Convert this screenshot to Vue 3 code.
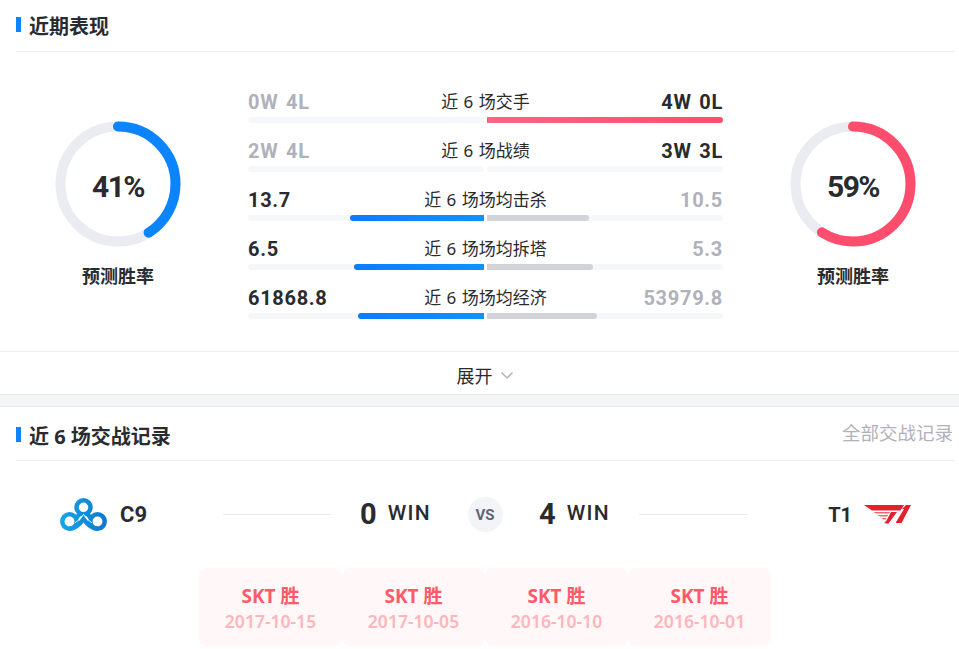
<template>
  <div class="page">
    <section class="panel">
      <div class="head">
        <h2 class="title">近期表现</h2>
      </div>
      <div class="stats">
        <div class="ring-box">
          <div class="ring">
            <svg width="126" height="126" viewBox="0 0 126 126">
              <circle cx="63" cy="63" r="57.5" class="ring-bg" />
              <circle
                cx="63" cy="63" r="57.5" class="ring-bar" stroke="#0a84ff"
                :stroke-dasharray="dash(41)" transform="rotate(-90 63 63)"
              />
            </svg>
            <span class="ring-num">41%</span>
          </div>
          <p class="ring-label">预测胜率</p>
        </div>

        <div class="rows">
          <div class="row" v-for="r in rows" :key="r.label">
            <div class="row-text">
              <span class="num" :class="{ dim: r.win !== 'l' }">{{ r.left }}</span>
              <span class="label">{{ r.label }}</span>
              <span class="num" :class="{ dim: r.win !== 'r' }">{{ r.right }}</span>
            </div>
            <div class="bars">
              <div class="track left">
                <div class="fill blue" :style="{ width: r.lw + 'px' }"></div>
              </div>
              <div class="track">
                <div class="fill" :class="r.win === 'r' ? 'red' : 'gray'" :style="{ width: r.rw + 'px' }"></div>
              </div>
            </div>
          </div>
        </div>

        <div class="ring-box">
          <div class="ring">
            <svg width="126" height="126" viewBox="0 0 126 126">
              <circle cx="63" cy="63" r="57.5" class="ring-bg" />
              <circle
                cx="63" cy="63" r="57.5" class="ring-bar" stroke="#ff4d6d"
                :stroke-dasharray="dash(59)" transform="rotate(-90 63 63)"
              />
            </svg>
            <span class="ring-num">59%</span>
          </div>
          <p class="ring-label">预测胜率</p>
        </div>
      </div>
      <div class="more">
        <span>展开</span>
        <svg width="14" height="14" viewBox="0 0 14 14" class="chev">
          <path d="M1.500 4.500 7 10l5.500-5.500" fill="none" stroke="#b0b1bb" stroke-width="1.500" />
        </svg>
      </div>
    </section>

    <section class="panel second">
      <div class="head">
        <h2 class="title">近 6 场交战记录</h2>
        <a class="all">全部交战记录</a>
      </div>
      <div class="versus">
        <div class="team">
          <svg class="c9" width="47" height="34" viewBox="0 0 47 34">
            <defs>
              <linearGradient id="c9g" gradientUnits="userSpaceOnUse" x1="0" y1="0" x2="47" y2="0">
                <stop offset="0" stop-color="#17a6e8" />
                <stop offset="1" stop-color="#0a78cf" />
              </linearGradient>
            </defs>
            <g fill="none" stroke="url(#c9g)" stroke-width="4.500">
              <circle cx="23.500" cy="9.300" r="7" />
              <circle cx="9.500" cy="23.500" r="7.200" />
              <circle cx="37.500" cy="23.500" r="7.200" />
              <path d="M9.500 30.700C15.500 30.700 20 26 23.500 21 27 26 31.500 30.700 37.500 30.700" />
              <path d="M19.500 15.500C18.500 18 17 19.500 15 20" />
              <path d="M27.500 15.500C28.500 18 30 19.500 32 20" />
            </g>
            <g fill="none" stroke="#fff" stroke-width="1" stroke-linecap="round">
              <path d="M23.500 16.500C21.500 19 19 22 15.500 24.500" />
              <path d="M23.500 16.500C25.500 19 28 22 31.500 24.500" />
            </g>
          </svg>
          <span class="team-name c9-name">C9</span>
        </div>
        <div class="line"></div>
        <div class="score">
          <div class="score-side"><b>0</b><span>WIN</span></div>
          <div class="vs">VS</div>
          <div class="score-side"><b>4</b><span>WIN</span></div>
        </div>
        <div class="line"></div>
        <div class="team right">
          <span class="team-name t1-name">T1</span>
          <svg width="47" height="19" viewBox="0 0 47 19">
            <path d="M0 0H40L36.500 5.500H8Z" fill="#e4202f" />
            <path d="M9.500 7H26L25 8.500H12Z" fill="#f0666f" />
            <path d="M13.500 10H24.200L23.200 11.500H16Z" fill="#f0666f" />
            <path d="M17.500 13H22.500L21.500 14.500H19.500Z" fill="#f0666f" />
            <path d="M27 7H33L24.500 18.500H21.500L20.500 16.500H22Z" fill="#e4202f" />
            <path d="M42 0H47L37.500 18H31.500L40 4H38Z" fill="#e4202f" />
          </svg>
        </div>
      </div>
      <div class="matches">
        <div class="match" v-for="d in dates" :key="d">
          <div class="match-res">SKT 胜</div>
          <div class="match-date">{{ d }}</div>
        </div>
      </div>
    </section>
  </div>
</template>

<script setup>
const rows = [
  { left: '0W 4L', right: '4W 0L', label: '近 6 场交手', lw: 0, rw: 236, win: 'r' },
  { left: '2W 4L', right: '3W 3L', label: '近 6 场战绩', lw: 0, rw: 0, win: 'r' },
  { left: '13.7', right: '10.5', label: '近 6 场场均击杀', lw: 134, rw: 102, win: 'l' },
  { left: '6.5', right: '5.3', label: '近 6 场场均拆塔', lw: 130, rw: 106, win: 'l' },
  { left: '61868.8', right: '53979.8', label: '近 6 场场均经济', lw: 126, rw: 110, win: 'l' },
]

const dates = ['2017-10-15', '2017-10-05', '2016-10-10', '2016-10-01']

const dash = (pct) => {
  const len = 2 * Math.PI * 57.5
  return `${(len * pct) / 100} ${len}`
}
</script>

<style>
html, body {
  background: #f4f5f7;
  overflow: hidden;
}
</style>

<style scoped>
.page {
  width: 959px;
  height: 649px;
  font-family: "Noto Sans", "Noto Sans CJK SC", sans-serif;
  color: #2a2b2f;
  overflow: hidden;
}
.panel {
  background: #fff;
  padding: 0 4px 0 16px;
  height: 394px;
  border-bottom: 1px solid #e9eaee;
}
.second {
  margin-top: 11px;
  height: 243px;
  border-top: 1px solid #e9eaee;
  border-bottom: none;
}
.head {
  height: 51px;
  display: flex;
  align-items: center;
  justify-content: space-between;
  border-bottom: 1px solid #eeeff2;
}
.second .head {
  height: 53px;
}
.title {
  margin: 0;
  font-size: 20px;
  font-weight: 700;
  line-height: 24px;
  padding-left: 13px;
  position: relative;
  top: 1px;
}
.second .title {
  top: 3px;
}
.title::before {
  content: "";
  position: absolute;
  left: 0;
  top: 2.500px;
  width: 5px;
  height: 15px;
  background: #0a84ff;
}
.all {
  font-size: 18.500px;
  color: #b0b1bb;
  padding-right: 2px;
  position: relative;
  top: -2px;
}
.stats {
  display: flex;
  height: 299px;
  padding-top: 38px;
  box-sizing: border-box;
}
.ring-box {
  width: 204px;
  flex: none;
  display: flex;
  flex-direction: column;
  align-items: center;
  padding-top: 31px;
}
.ring {
  width: 126px;
  height: 126px;
  position: relative;
}
.ring svg {
  display: block;
}
.ring-bg {
  fill: none;
  stroke: #ebecf2;
  stroke-width: 10;
}
.ring-bar {
  fill: none;
  stroke-width: 10;
  stroke-linecap: round;
}
.ring-num {
  position: absolute;
  inset: 4px 0 0;
  display: flex;
  align-items: center;
  justify-content: center;
  font-family: Roboto, sans-serif;
  font-weight: 700;
  font-size: 30px;
  letter-spacing: -1.500px;
}
.ring-label {
  margin: 17px 0 0;
  font-size: 18px;
  font-weight: 700;
  line-height: 24px;
}
.rows {
  width: 475px;
  margin: 0 28px;
  flex: none;
  display: flex;
  flex-direction: column;
  gap: 16px;
}
.row-text {
  height: 24px;
  display: flex;
  justify-content: space-between;
  align-items: center;
  position: relative;
}
.num {
  font-family: Roboto, sans-serif;
  font-weight: 700;
  font-size: 20px;
  letter-spacing: 0.7px;
  word-spacing: 2px;
  line-height: 24px;
}
.dim {
  color: #b0b1bb;
}
.label {
  position: absolute;
  left: 0;
  right: 0;
  top: 0;
  text-align: center;
  font-size: 17px;
  line-height: 24px;
  word-spacing: 1px;
}
.bars {
  margin-top: 3px;
  display: flex;
  gap: 3px;
}
.track {
  flex: 1;
  height: 6px;
  background: #f6f7f9;
  border-radius: 3px;
  display: flex;
}
.track.left {
  justify-content: flex-end;
}
.fill {
  height: 6px;
}
.blue {
  background: linear-gradient(90deg, #0a7dff, #0f92ff);
  border-radius: 3px 0 0 3px;
}
.gray {
  background: #d2d3d9;
  border-radius: 0 3px 3px 0;
}
.red {
  background: linear-gradient(90deg, #ff6482, #ff4d6d);
  border-radius: 0 3px 3px 0;
}
.more {
  height: 42px;
  border-top: 1px solid #eeeff2;
  margin: 0 -4px 0 -16px;
  display: flex;
  align-items: center;
  justify-content: center;
  gap: 7px;
  font-size: 18px;
  padding: 4px 0 0 11px;
  box-sizing: border-box;
}
.chev {
  display: block;
}
.versus {
  display: grid;
  grid-template-columns: 207px 108px 308px 109px 207px;
  align-items: center;
  height: 107px;
}
.team {
  display: flex;
  align-items: center;
  gap: 13px;
  padding: 0 44px;
}
.team.right {
  justify-content: flex-end;
  gap: 12px;
}
.team-name {
  font-family: Roboto, sans-serif;
  font-weight: 700;
  font-size: 20px;
}
.c9-name {
  font-size: 22px;
}
.line {
  height: 1px;
  background: #e9eaee;
}
.score {
  display: flex;
  justify-content: space-between;
  align-items: center;
  padding: 0 29px;
}
.score-side {
  width: 71px;
  display: flex;
  justify-content: space-between;
  align-items: center;
}
.score-side b {
  font-family: Roboto, sans-serif;
  font-size: 29px;
  font-weight: 700;
  position: relative;
  top: -1px;
}
.score-side span {
  font-family: Roboto, sans-serif;
  font-weight: 500;
  font-size: 21px;
  letter-spacing: 1.300px;
  position: relative;
  top: -2px;
}
.vs {
  width: 35px;
  height: 35px;
  border-radius: 50%;
  background: #f3f4f7;
  color: #5f6672;
  font-family: Roboto, sans-serif;
  font-weight: 700;
  font-size: 15px;
  display: flex;
  align-items: center;
  justify-content: center;
}
.matches {
  display: flex;
  justify-content: center;
  margin-left: -1px;
}
.match {
  width: 143px;
  height: 78px;
  background: #fff7f8;
  border-radius: 8px;
  display: flex;
  flex-direction: column;
  align-items: center;
  justify-content: center;
  padding-top: 2px;
  box-sizing: border-box;
}
.match-res {
  color: #ff5a6a;
  font-size: 19px;
  font-weight: 700;
  line-height: 26px;
}
.match-date {
  color: #ffb5ba;
  font-size: 17.500px;
  font-weight: 600;
  line-height: 24px;
}
</style>
